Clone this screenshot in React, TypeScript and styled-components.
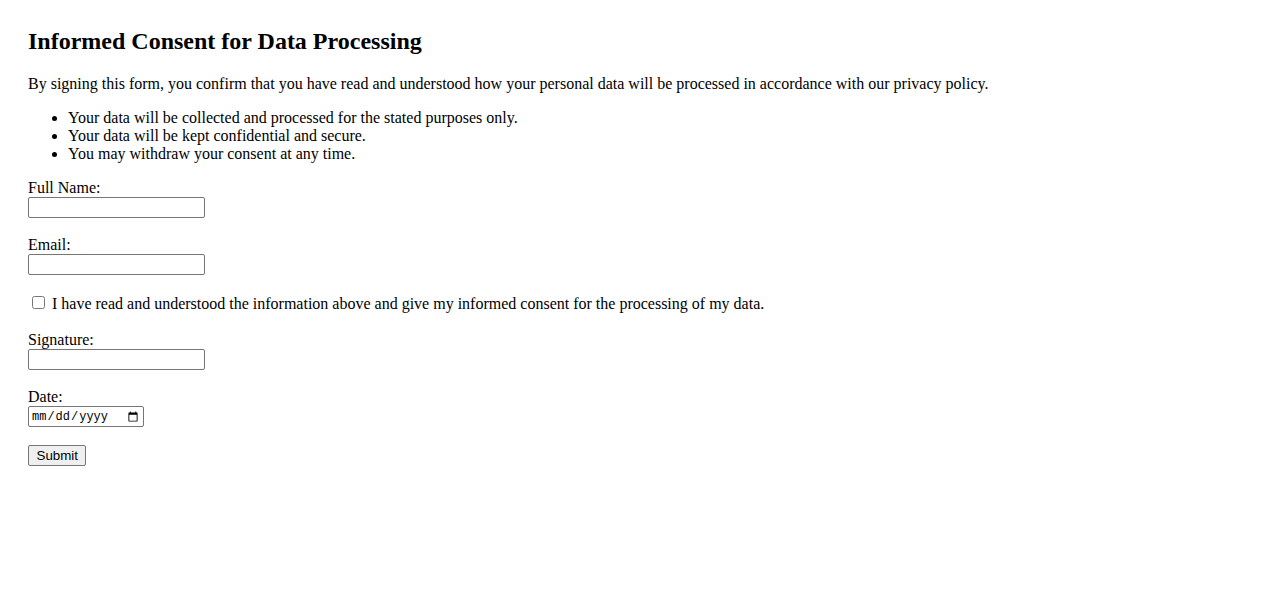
import React from "react";
import { styled, createGlobalStyle } from "styled-components";

const GlobalStyle = createGlobalStyle`
  html, body {
    margin: 0;
    padding: 0;
    background: #ffffff;
  }
  body {
    font-family: "Liberation Serif", "Times New Roman", serif;
    font-size: 16px;
    color: #000000;
  }
`;

const App = () => {
  return (
    <>
      <GlobalStyle />
      <Page>
        <Title>Informed Consent for Data Processing</Title>
        <Intro>
          By signing this form, you confirm that you have read and understood how your personal
          data will be processed in accordance with our privacy policy.
        </Intro>
        <Points>
          <li>Your data will be collected and processed for the stated purposes only.</li>
          <li>Your data will be kept confidential and secure.</li>
          <li>You may withdraw your consent at any time.</li>
        </Points>
        <form onSubmit={(e) => e.preventDefault()}>
          <Field>
            <Label htmlFor="name">Full Name:</Label>
            <TextInput id="name" type="text" />
          </Field>
          <Field>
            <Label htmlFor="email">Email:</Label>
            <TextInput id="email" type="email" />
          </Field>
          <ConsentRow>
            <Check id="consent" type="checkbox" />{" "}
            <label htmlFor="consent">
              I have read and understood the information above and give my informed consent for
              the processing of my data.
            </label>
          </ConsentRow>
          <Field>
            <Label htmlFor="signature">Signature:</Label>
            <TextInput id="signature" type="text" />
          </Field>
          <Field>
            <Label htmlFor="date">Date:</Label>
            <DateInput id="date" type="date" />
          </Field>
          <SubmitButton type="submit">Submit</SubmitButton>
        </form>
      </Page>
    </>
  );
};

export default App;

const Page = styled.div`
  padding: 7px 28px 8px;
`;

const Title = styled.h2`
  font-size: 24px;
  font-weight: 700;
  line-height: 28px;
  margin: 20px 0 20px;
`;

const Intro = styled.p`
  margin: 0 0 16px;
  line-height: 18px;
`;

const Points = styled.ul`
  margin: 0 0 16px;
  padding-left: 40px;
  line-height: 18px;
`;

const Field = styled.div`
  margin-bottom: 18px;
`;

const Label = styled.label`
  display: block;
  line-height: 18px;
`;

const TextInput = styled.input`
  display: block;
  box-sizing: border-box;
  width: 177px;
  height: 21px;
  margin: 0;
  padding: 1px 2px;
  border: 1px solid #767676;
  border-radius: 2px;
  font-family: "Liberation Sans", Arial, sans-serif;
  font-size: 13.33px;
`;

const DateInput = styled(TextInput)`
  width: 116px;
  font-family: "Liberation Mono", "DejaVu Sans Mono", monospace;
  font-size: 12px;
`;

const ConsentRow = styled.div`
  margin: 2px 0 18px;
  line-height: 18px;
`;

const Check = styled.input`
  width: 13px;
  height: 13px;
  margin: 3px 3px 3px 4px;
  vertical-align: 0;
`;

const SubmitButton = styled.button`
  box-sizing: border-box;
  height: 21px;
  padding: 1px 7.5px;
  margin: 0;
  border: 1px solid #767676;
  border-radius: 2px;
  background: #efefef;
  font-family: "Liberation Sans", Arial, sans-serif;
  font-size: 13.33px;
  color: #000000;
`;
